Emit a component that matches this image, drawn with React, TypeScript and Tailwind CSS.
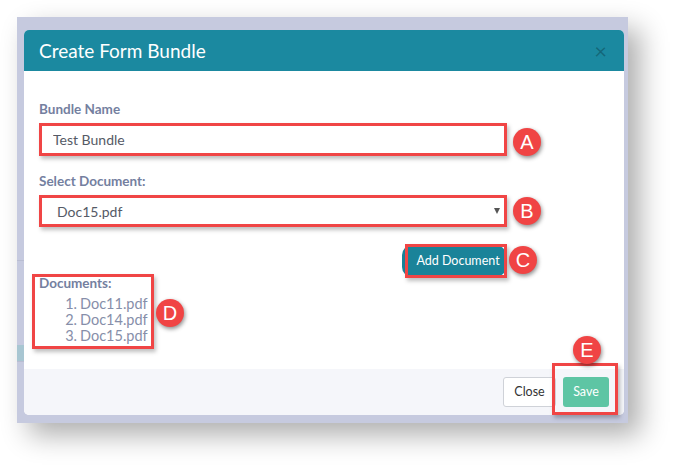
import React from 'react';

function Badge({ letter, className }: { letter: string; className: string }) {
  return (
    <span
      className={`absolute flex h-[28px] w-[28px] items-center justify-center rounded-full bg-[#f04444] font-['Liberation_Sans',Arial,sans-serif] text-[20px] leading-none text-white shadow-[1px_2px_4px_rgba(0,0,0,0.45)] ${className}`}
    >
      {letter}
    </span>
  );
}

const docs = ['Doc11.pdf', 'Doc14.pdf', 'Doc15.pdf'];

export default function App() {
  return (
    <div className="h-[472px] w-[677px] overflow-hidden bg-white pt-[17px] pl-[17px] font-['Lato','Open_Sans',sans-serif]">
      {/* screenshot frame with dimmed page behind the modal */}
      <div className="flex h-[406px] w-[611px] bg-[#c6cadf] pt-[13px] shadow-[12px_12px_26px_rgba(0,0,0,0.32)]">
        {/* sliver of the page behind */}
        <div className="flex w-[7px] flex-col">
          <div className="h-[230px]" />
          <div className="h-px bg-[#b9bdd2]" />
          <div className="h-[84px]" />
          <div className="h-[16px] bg-[#a8c6d2]" />
          <div className="h-px bg-[#b9bdd2]" />
        </div>

        {/* modal */}
        <div className="flex h-[385px] w-[600px] flex-col rounded-[5px] bg-white">
          <div className="flex h-[41px] items-center justify-between rounded-t-[5px] bg-[#1b89a0] pl-[15px] pr-[17px]">
            <h1 className="text-[19px] font-normal leading-none text-white">Create Form Bundle</h1>
            <span className="text-[22px] leading-none text-black/25">×</span>
          </div>

          <div className="flex-1 pl-[15px] pt-[29px]">
            <div className="flex w-[468px] flex-col">
              <label className="text-[13.5px] font-bold leading-[18px] text-[#74809f]">Bundle Name</label>
              <div className="relative mt-[5px] flex h-[33px] items-center border-[3px] border-[#f04545] shadow-[2px_3px_4px_rgba(0,0,0,0.25)]">
                <input
                  readOnly
                  value="Test Bundle"
                  className="h-full w-full bg-white pl-[11px] text-[14px] text-[#555a66] outline-none"
                />
                <Badge letter="A" className="left-[471px] top-[2px]" />
              </div>

              <label className="mt-[16px] text-[13.5px] font-bold leading-[18px] text-[#74809f]">Select Document:</label>
              <div className="relative mt-[5px] flex h-[32px] items-center justify-between border-[3px] border-[#f04545] bg-white pl-[15px] pr-[4px] shadow-[2px_3px_4px_rgba(0,0,0,0.25)]">
                <span className="text-[14px] text-[#555a66]">Doc15.pdf</span>
                <span className="h-0 w-0 border-l-[3.5px] border-r-[3.5px] border-t-[6px] border-l-transparent border-r-transparent border-t-[#555]" />
                <Badge letter="B" className="left-[471px] top-[-1px]" />
              </div>

              <div className="mt-[18px] flex justify-end pr-[1px]">
                <div className="relative">
                  <button className="flex h-[32px] w-[104px] items-center justify-center rounded-[10px] bg-[#1a8399] pl-[8px] text-[12.5px] text-white">
                    Add Document
                  </button>
                  <span className="absolute -bottom-[1px] -right-[1px] -top-[1px] left-[3px] border-[3px] border-[#f04545] shadow-[2px_3px_4px_rgba(0,0,0,0.25)]" />
                  <Badge letter="C" className="left-[107px] top-[1px]" />
                </div>
              </div>

              <div className="relative -mt-[3px] w-fit pb-[5px]">
                <span className="absolute -left-[7px] top-0 h-[75px] w-[122px] border-[3px] border-[#f04545] shadow-[2px_3px_4px_rgba(0,0,0,0.25)]" />
                <div className="text-[13.5px] font-bold leading-[18px] text-[#74809f]">Documents:</div>
                <ol className="mt-[4px]">
                  {docs.map((d, i) => (
                    <li key={d} className="flex text-[14.5px] leading-[16px] text-[#868ea9]">
                      <span className="w-[38px] text-right">{i + 1}.</span>
                      <span className="pl-[3px]">{d}</span>
                    </li>
                  ))}
                </ol>
                <Badge letter="D" className="left-[117px] top-[25px]" />
              </div>
            </div>
          </div>

          <div className="flex h-[46px] items-center justify-end gap-[7px] rounded-b-[5px] bg-[#f5f6fa] pr-[15px]">
            <button className="h-[30px] w-[53px] rounded-[3px] border border-[#cfd2d8] bg-white text-[12.5px] text-[#333]">
              Close
            </button>
            <div className="relative">
              <button className="h-[30px] w-[46px] rounded-[3px] bg-[#5ec5a4] text-[12.5px] text-white">Save</button>
              <span className="absolute -bottom-[8px] -left-[11px] -right-[9px] -top-[14px] border-[3px] border-[#f04545] shadow-[2px_3px_4px_rgba(0,0,0,0.25)]" />
              <Badge letter="E" className="-top-[41px] left-[10px]" />
            </div>
          </div>
        </div>
      </div>
    </div>
  );
}
